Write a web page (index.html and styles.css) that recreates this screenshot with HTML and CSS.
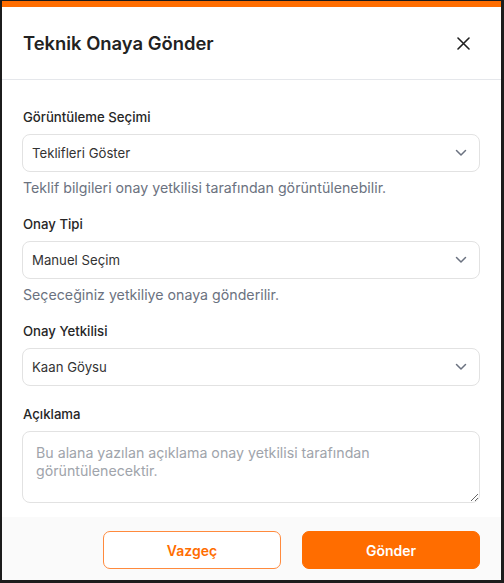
FILE: index.html
```html
<!DOCTYPE html>
<html lang="tr">
<head>
<meta charset="utf-8">
<link rel="stylesheet" href="styles.css">
</head>
<body>
<div class="modal">
  <div class="accent"></div>
  <header class="head">
    <h1 class="title">Teknik Onaya Gönder</h1>
    <button class="close" aria-label="Kapat">
      <svg width="13" height="13" viewBox="0 0 13 13"><path d="M1 1L12 12M12 1L1 12" stroke="#1f1f1f" stroke-width="1.6" stroke-linecap="round"/></svg>
    </button>
  </header>
  <main class="body">
    <div class="field">
      <div class="label">Görüntüleme Seçimi</div>
      <div class="select"><span>Teklifleri Göster</span>
        <svg class="chev" width="12" height="8" viewBox="0 0 12 8"><path d="M1.5 1.5L6 6L10.5 1.5" fill="none" stroke="#6b7280" stroke-width="1.5" stroke-linecap="round" stroke-linejoin="round"/></svg>
      </div>
      <div class="help">Teklif bilgileri onay yetkilisi tarafından görüntülenebilir.</div>
    </div>
    <div class="field">
      <div class="label">Onay Tipi</div>
      <div class="select"><span>Manuel Seçim</span>
        <svg class="chev" width="12" height="8" viewBox="0 0 12 8"><path d="M1.5 1.5L6 6L10.5 1.5" fill="none" stroke="#6b7280" stroke-width="1.5" stroke-linecap="round" stroke-linejoin="round"/></svg>
      </div>
      <div class="help">Seçeceğiniz yetkiliye onaya gönderilir.</div>
    </div>
    <div class="field">
      <div class="label">Onay Yetkilisi</div>
      <div class="select"><span>Kaan Göysu</span>
        <svg class="chev" width="12" height="8" viewBox="0 0 12 8"><path d="M1.5 1.5L6 6L10.5 1.5" fill="none" stroke="#6b7280" stroke-width="1.5" stroke-linecap="round" stroke-linejoin="round"/></svg>
      </div>
    </div>
    <div class="field last">
      <div class="label">Açıklama</div>
      <textarea class="area" placeholder="Bu alana yazılan açıklama onay yetkilisi tarafından görüntülenecektir."></textarea>
    </div>
  </main>
  <footer class="foot">
    <button class="btn ghost">Vazgeç</button>
    <button class="btn primary">Gönder</button>
  </footer>
</div>
</body>
</html>
```

FILE: styles.css
```css
* { box-sizing: border-box; }
html, body { margin: 0; padding: 0; background: #fff; }
body {
  font-family: Inter, "Noto Sans", sans-serif;
  color: #1f2937;
  width: 504px;
  height: 583px;
}
.modal {
  width: 504px;
  height: 583px;
  border-style: solid;
  border-color: #1c1c1c;
  border-width: 1px 3px 3px 2px;
  display: flex;
  flex-direction: column;
  background: #fff;
}
.accent { height: 6px; background: #ff6d00; flex: none; }
.head {
  height: 73px;
  flex: none;
  display: flex;
  align-items: center;
  justify-content: space-between;
  padding: 0 31px 0 21px;
  border-bottom: 1px solid #e5e7eb;
}
.title {
  margin: 0;
  font-size: 18.4px;
  font-weight: 600;
  color: #222;
}
.close {
  border: 0;
  background: none;
  padding: 0;
  width: 13px;
  height: 13px;
  display: flex;
}
.body {
  padding: 27px 21px 0 20px;
  flex: 1;
  display: flex;
  flex-direction: column;
}
.field { display: flex; flex-direction: column; margin-bottom: 16px; }
.field.last { margin-bottom: 0; margin-top: 2px; }
.label {
  font-size: 13.2px;
  font-weight: 500;
  line-height: 20px;
  color: #262626;
  margin-bottom: 7px;
  padding-left: 1px;
}
.select {
  height: 38px;
  border: 1px solid #e2e2e2;
  border-radius: 8px;
  display: flex;
  align-items: center;
  justify-content: space-between;
  padding: 0 12px 0 9px;
  font-size: 13.2px;
  color: #333;
}
.chev { display: block; }
.help {
  font-size: 14.2px;
  line-height: 20px;
  color: #6b7280;
  margin-top: 6px;
  padding-left: 1px;
}
.area {
  height: 72px;
  border: 1px solid #e2e2e2;
  border-radius: 8px;
  padding: 12px 13px 8px;
  font-family: inherit;
  font-size: 14.2px;
  line-height: 18px;
  resize: vertical;
  width: 100%;
  display: block;
}
.area::placeholder { color: #a0a4ab; }
.foot {
  flex: none;
  height: 63px;
  background: #fafafa;
  display: flex;
  justify-content: flex-end;
  align-items: flex-start;
  gap: 21px;
  padding: 14px 21px 0 0;
}
.btn {
  width: 178px;
  height: 38px;
  border-radius: 7px;
  font-family: inherit;
  font-size: 14px;
  font-weight: 600;
}
.ghost { background: #fff; border: 1px solid #ff8a3d; color: #ff6d00; }
.primary { background: #ff6d00; border: 1px solid #ff6d00; color: #fff; }
```
